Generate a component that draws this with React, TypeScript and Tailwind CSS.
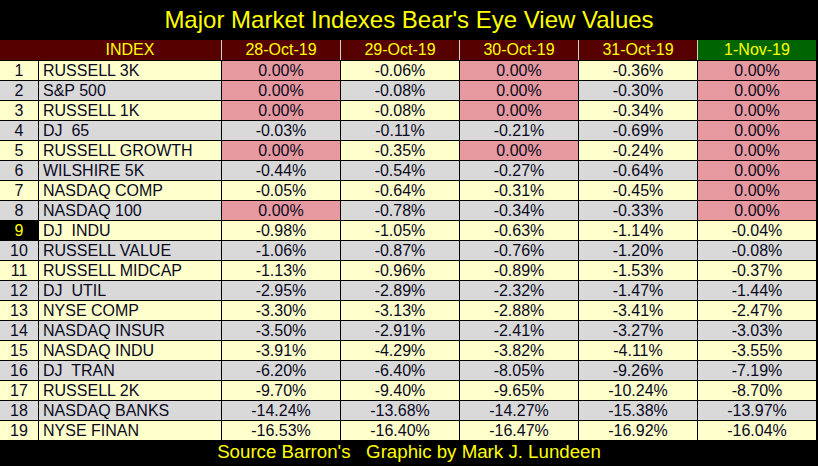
import React from "react";

type Row = [string, string[]];

const dates = ["28-Oct-19", "29-Oct-19", "30-Oct-19", "31-Oct-19", "1-Nov-19"];

const rows: Row[] = [
  ["RUSSELL 3K", ["0.00%", "-0.06%", "0.00%", "-0.36%", "0.00%"]],
  ["S&P 500", ["0.00%", "-0.08%", "0.00%", "-0.30%", "0.00%"]],
  ["RUSSELL 1K", ["0.00%", "-0.08%", "0.00%", "-0.34%", "0.00%"]],
  ["DJ  65", ["-0.03%", "-0.11%", "-0.21%", "-0.69%", "0.00%"]],
  ["RUSSELL GROWTH", ["0.00%", "-0.35%", "0.00%", "-0.24%", "0.00%"]],
  ["WILSHIRE 5K", ["-0.44%", "-0.54%", "-0.27%", "-0.64%", "0.00%"]],
  ["NASDAQ COMP", ["-0.05%", "-0.64%", "-0.31%", "-0.45%", "0.00%"]],
  ["NASDAQ 100", ["0.00%", "-0.78%", "-0.34%", "-0.33%", "0.00%"]],
  ["DJ  INDU", ["-0.98%", "-1.05%", "-0.63%", "-1.14%", "-0.04%"]],
  ["RUSSELL VALUE", ["-1.06%", "-0.87%", "-0.76%", "-1.20%", "-0.08%"]],
  ["RUSSELL MIDCAP", ["-1.13%", "-0.96%", "-0.89%", "-1.53%", "-0.37%"]],
  ["DJ  UTIL", ["-2.95%", "-2.89%", "-2.32%", "-1.47%", "-1.44%"]],
  ["NYSE COMP", ["-3.30%", "-3.13%", "-2.88%", "-3.41%", "-2.47%"]],
  ["NASDAQ INSUR", ["-3.50%", "-2.91%", "-2.41%", "-3.27%", "-3.03%"]],
  ["NASDAQ INDU", ["-3.91%", "-4.29%", "-3.82%", "-4.11%", "-3.55%"]],
  ["DJ  TRAN", ["-6.20%", "-6.40%", "-8.05%", "-9.26%", "-7.19%"]],
  ["RUSSELL 2K", ["-9.70%", "-9.40%", "-9.65%", "-10.24%", "-8.70%"]],
  ["NASDAQ BANKS", ["-14.24%", "-13.68%", "-14.27%", "-15.38%", "-13.97%"]],
  ["NYSE FINAN", ["-16.53%", "-16.40%", "-16.47%", "-16.92%", "-16.04%"]],
];

const font = { fontFamily: '"Liberation Sans", Arial, sans-serif' };

export default function App() {
  return (
    <div className="w-[818px] h-[466px] bg-black overflow-hidden" style={font}>
      <div className="h-[40px] flex items-center justify-center text-[24px] text-[#ffff00] pb-[1px]">
        Major Market Indexes Bear's Eye View Values
      </div>

      <div className="w-[816px]">
        <div className="grid grid-cols-[221px_118px_118px_118px_118px_118px] gap-x-px bg-[#d0d0d0] h-[20px] text-[16px] text-[#ffff00]">
          <div className="bg-[#570000] flex items-center justify-center pl-[39px] leading-none">INDEX</div>
          {dates.map((d, i) => (
            <div
              key={d}
              className={`${i === 4 ? "bg-[#006400]" : "bg-[#570000]"} flex items-center justify-center leading-none`}
            >
              {d}
            </div>
          ))}
        </div>

        <div className="mt-px grid grid-cols-[38px_182px_118px_118px_118px_118px_118px] auto-rows-[19px] gap-px bg-black text-[16px] text-[#0a0a1e]">
          {rows.map(([name, vals], r) => {
            const base = r % 2 === 0 ? "bg-[#ffffcc]" : "bg-[#d9d9d9]";
            const hi = r === 8;
            return (
              <React.Fragment key={name}>
                <div
                  className={`${hi ? "bg-black text-[#ffff00]" : base} flex items-center justify-center leading-none`}
                >
                  {r + 1}
                </div>
                <div className={`${base} flex items-center pl-[4px] leading-none whitespace-pre`}>{name}</div>
                {vals.map((v, c) => (
                  <div
                    key={c}
                    className={`${v === "0.00%" ? "bg-[#e6999f]" : base} flex items-center justify-center leading-none`}
                  >
                    {v}
                  </div>
                ))}
              </React.Fragment>
            );
          })}
        </div>
      </div>

      <div className="h-[25px] flex items-center justify-center text-[18.7px] text-[#ffff00] whitespace-pre">
        {"Source Barron's   Graphic by Mark J. Lundeen"}
      </div>
    </div>
  );
}
